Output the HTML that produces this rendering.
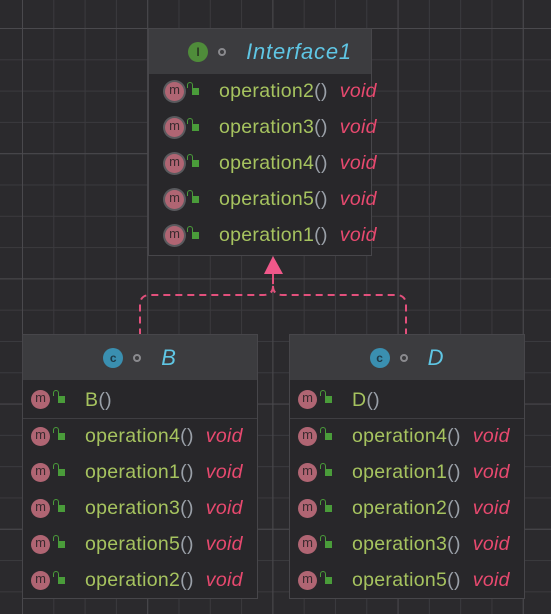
<!DOCTYPE html>
<html><head><meta charset="utf-8"><style>
body{margin:0;width:551px;height:614px;overflow:hidden;background-color:#2b2a2d;
background-image:
linear-gradient(to right,#4a494d 0,#4a494d 1px,transparent 1px),
linear-gradient(to bottom,#4a494d 0,#4a494d 1px,transparent 1px),
linear-gradient(to right,#3b3a3e 0,#3b3a3e 1px,transparent 1px),
linear-gradient(to bottom,#3b3a3e 0,#3b3a3e 1px,transparent 1px);
background-size:125.2px 125.2px,125.2px 125.2px,31.3px 31.3px,31.3px 31.3px;
background-position:22px 28px,22px 28px,22px 28px,22px 28px;
font-family:"Liberation Sans","DejaVu Sans",sans-serif;position:relative}
.box{position:absolute;background:#28272a;border:1px solid #47464a;box-sizing:border-box}
.hd{background:#3c3c3f;height:45px;display:flex;align-items:center;justify-content:center;color:#5fc6e4;font-style:italic;font-size:22px;letter-spacing:0.8px}
.ci{width:20px;height:20px;border-radius:50%;display:inline-flex;align-items:center;justify-content:center;font-size:12px;font-style:normal;font-weight:bold;margin-right:10px;letter-spacing:0}
.dot{width:4px;height:4px;border:2px solid #8a8a8e;border-radius:50%;margin-right:20px}
.row{height:36px;position:relative;font-size:19.5px;color:#a6c35f;letter-spacing:0.3px}
.row .m{position:absolute;left:8px;top:8px;width:19px;height:19px;border-radius:50%;background:#b06573;color:#3a2a2e;font-size:13px;text-align:center;line-height:16px;letter-spacing:0}
.i .m{left:16px;box-shadow:0 0 0 2px #5a5a5e}
.row .l{position:absolute;left:35px;top:14px;width:7px;height:7px;background:#4a9c3a}
.i .l{left:43px}
.row .l:before{content:"";position:absolute;left:-5px;top:-6px;width:4px;height:5px;border:1.5px solid #4a9c3a;border-bottom:none;border-radius:3px 3px 0 0}
.row .t{position:absolute;left:62px;top:6px;white-space:nowrap}
.i .t{left:70px}
.p{color:#9aa0a8}
.v{color:#e8496f;font-style:italic;margin-left:12px}
.sep{border-top:1px solid #3f3e42}
</style></head><body>
<svg width="551" height="614" style="position:absolute;left:0;top:0">
<g fill="none" stroke="#e2507c" stroke-width="2" stroke-dasharray="7,5">
<path d="M273 274 V286 Q273 295 283 295 H396 Q406 295 406 305 V334"/>
<path d="M273 286 Q273 295 263 295 H150 Q140 295 140 305 V334"/>
</g>
<line x1="273" y1="272" x2="273" y2="284" stroke="#e2507c" stroke-width="2"/>
<polygon points="273,256 264,274 283,274" fill="#f0588a"/>
</svg>

<div class="box" style="left:148px;top:28px;width:224px;height:228px">
<div class="hd" style="padding-left:20px"><span class="ci" style="background:#4f8c3a;color:#2a3a22">I</span><span class="dot"></span>Interface1</div>
<div class="row i"><span class="m">m</span><span class="l"></span><span class="t">operation2<span class="p">()</span><span class="v">void</span></span></div>
<div class="row i"><span class="m">m</span><span class="l"></span><span class="t">operation3<span class="p">()</span><span class="v">void</span></span></div>
<div class="row i"><span class="m">m</span><span class="l"></span><span class="t">operation4<span class="p">()</span><span class="v">void</span></span></div>
<div class="row i"><span class="m">m</span><span class="l"></span><span class="t">operation5<span class="p">()</span><span class="v">void</span></span></div>
<div class="row i"><span class="m">m</span><span class="l"></span><span class="t">operation1<span class="p">()</span><span class="v">void</span></span></div>
</div>

<div class="box" style="left:22px;top:334px;width:236px;height:265px">
<div class="hd"><span class="ci" style="background:#3a8fb0;color:#1e3a48">c</span><span class="dot"></span>B</div>
<div class="row" style="height:38px"><span class="m" style="top:10px">m</span><span class="l" style="top:16px"></span><span class="t" style="top:9px">B<span class="p">()</span></span></div>
<div class="sep"></div>
<div class="row"><span class="m">m</span><span class="l"></span><span class="t">operation4<span class="p">()</span><span class="v">void</span></span></div>
<div class="row"><span class="m">m</span><span class="l"></span><span class="t">operation1<span class="p">()</span><span class="v">void</span></span></div>
<div class="row"><span class="m">m</span><span class="l"></span><span class="t">operation3<span class="p">()</span><span class="v">void</span></span></div>
<div class="row"><span class="m">m</span><span class="l"></span><span class="t">operation5<span class="p">()</span><span class="v">void</span></span></div>
<div class="row"><span class="m">m</span><span class="l"></span><span class="t">operation2<span class="p">()</span><span class="v">void</span></span></div>
</div>

<div class="box" style="left:289px;top:334px;width:236px;height:265px">
<div class="hd"><span class="ci" style="background:#3a8fb0;color:#1e3a48">c</span><span class="dot"></span>D</div>
<div class="row" style="height:38px"><span class="m" style="top:10px">m</span><span class="l" style="top:16px"></span><span class="t" style="top:9px">D<span class="p">()</span></span></div>
<div class="sep"></div>
<div class="row"><span class="m">m</span><span class="l"></span><span class="t">operation4<span class="p">()</span><span class="v">void</span></span></div>
<div class="row"><span class="m">m</span><span class="l"></span><span class="t">operation1<span class="p">()</span><span class="v">void</span></span></div>
<div class="row"><span class="m">m</span><span class="l"></span><span class="t">operation2<span class="p">()</span><span class="v">void</span></span></div>
<div class="row"><span class="m">m</span><span class="l"></span><span class="t">operation3<span class="p">()</span><span class="v">void</span></span></div>
<div class="row"><span class="m">m</span><span class="l"></span><span class="t">operation5<span class="p">()</span><span class="v">void</span></span></div>
</div>
</body></html>
